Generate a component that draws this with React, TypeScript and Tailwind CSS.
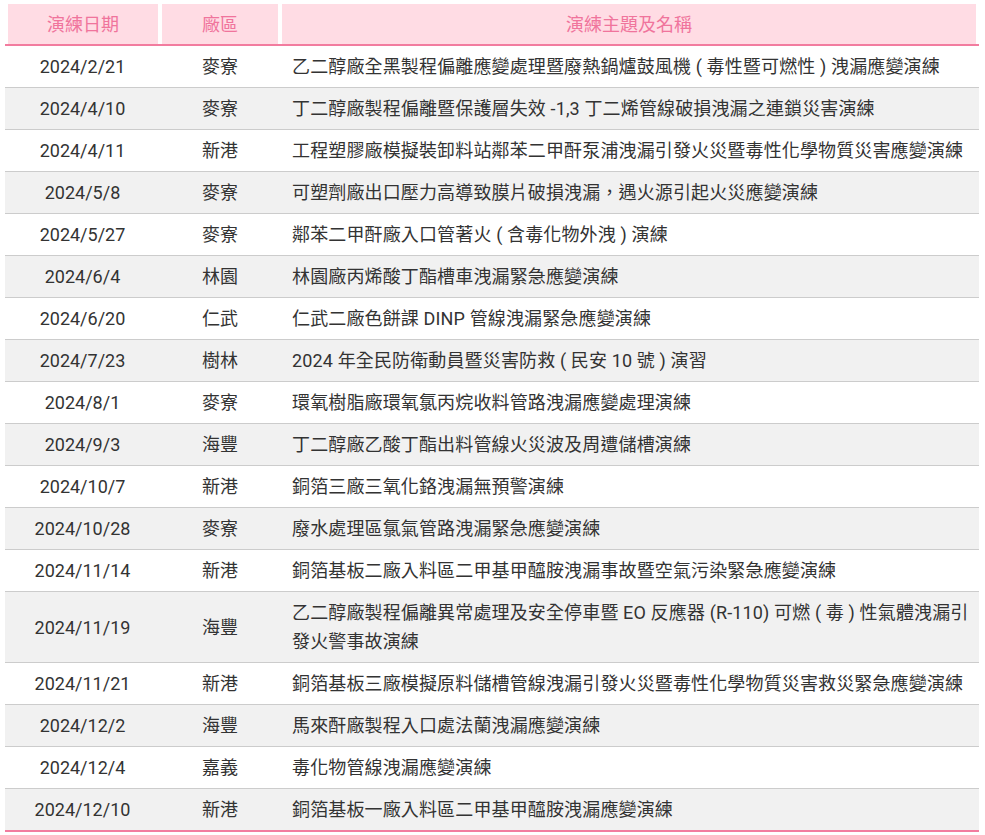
const rows: [string, string, string][] = [
  ["2024/2/21", "麥寮", "乙二醇廠全黑製程偏離應變處理暨廢熱鍋爐鼓風機 ( 毒性暨可燃性 ) 洩漏應變演練"],
  ["2024/4/10", "麥寮", "丁二醇廠製程偏離暨保護層失效 -1,3 丁二烯管線破損洩漏之連鎖災害演練"],
  ["2024/4/11", "新港", "工程塑膠廠模擬裝卸料站鄰苯二甲酐泵浦洩漏引發火災暨毒性化學物質災害應變演練"],
  ["2024/5/8", "麥寮", "可塑劑廠出口壓力高導致膜片破損洩漏，遇火源引起火災應變演練"],
  ["2024/5/27", "麥寮", "鄰苯二甲酐廠入口管著火 ( 含毒化物外洩 ) 演練"],
  ["2024/6/4", "林園", "林園廠丙烯酸丁酯槽車洩漏緊急應變演練"],
  ["2024/6/20", "仁武", "仁武二廠色餅課 DINP 管線洩漏緊急應變演練"],
  ["2024/7/23", "樹林", "2024 年全民防衛動員暨災害防救 ( 民安 10 號 ) 演習"],
  ["2024/8/1", "麥寮", "環氧樹脂廠環氧氯丙烷收料管路洩漏應變處理演練"],
  ["2024/9/3", "海豐", "丁二醇廠乙酸丁酯出料管線火災波及周遭儲槽演練"],
  ["2024/10/7", "新港", "銅箔三廠三氧化鉻洩漏無預警演練"],
  ["2024/10/28", "麥寮", "廢水處理區氯氣管路洩漏緊急應變演練"],
  ["2024/11/14", "新港", "銅箔基板二廠入料區二甲基甲醯胺洩漏事故暨空氣污染緊急應變演練"],
  ["2024/11/19", "海豐", "乙二醇廠製程偏離異常處理及安全停車暨 EO 反應器 (R-110) 可燃 ( 毒 ) 性氣體洩漏引發火警事故演練"],
  ["2024/11/21", "新港", "銅箔基板三廠模擬原料儲槽管線洩漏引發火災暨毒性化學物質災害救災緊急應變演練"],
  ["2024/12/2", "海豐", "馬來酐廠製程入口處法蘭洩漏應變演練"],
  ["2024/12/4", "嘉義", "毒化物管線洩漏應變演練"],
  ["2024/12/10", "新港", "銅箔基板一廠入料區二甲基甲醯胺洩漏應變演練"],
];

const headers = ["演練日期", "廠區", "演練主題及名稱"];

export default function App() {
  return (
    <div className="min-h-screen bg-white font-['Roboto','Noto_Sans_CJK_TC',sans-serif] text-[18px] text-[#333333]">
      <table className="ml-[5px] w-[974px] table-fixed border-collapse">
        <colgroup>
          <col className="w-[155px]" />
          <col className="w-[120px]" />
          <col className="w-[699px]" />
        </colgroup>
        <thead>
          <tr>
            {headers.map((h, i) => (
              <th
                key={h}
                className={
                  "border-b-2 border-[#f27c9f] p-0 pt-[4px] font-normal " +
                  (i === 0 ? "pl-[3px] pr-[2px]" : i === 2 ? "pl-[2px] pr-[3px]" : "px-[2px]")
                }
              >
                <div className="flex h-[40px] items-center justify-center bg-[#ffdce4] text-[#f0749c]">
                  {h}
                </div>
              </th>
            ))}
          </tr>
        </thead>
        <tbody>
          {rows.map(([date, site, name], i) => (
            <tr
              key={date}
              className={
                (i % 2 === 1 ? "bg-[#f1f1f1] " : "bg-white ") +
                (i === rows.length - 1 ? "border-b-2 border-[#f27c9f]" : "border-b border-[#cccccc]")
              }
            >
              <td className="py-[6px] text-center leading-[29px]">{date}</td>
              <td className="py-[6px] text-center leading-[29px]">{site}</td>
              <td className="py-[6px] pl-[12px] pr-[10px] text-left leading-[29px] tracking-[0.14px]">
                {name}
              </td>
            </tr>
          ))}
        </tbody>
      </table>
    </div>
  );
}
